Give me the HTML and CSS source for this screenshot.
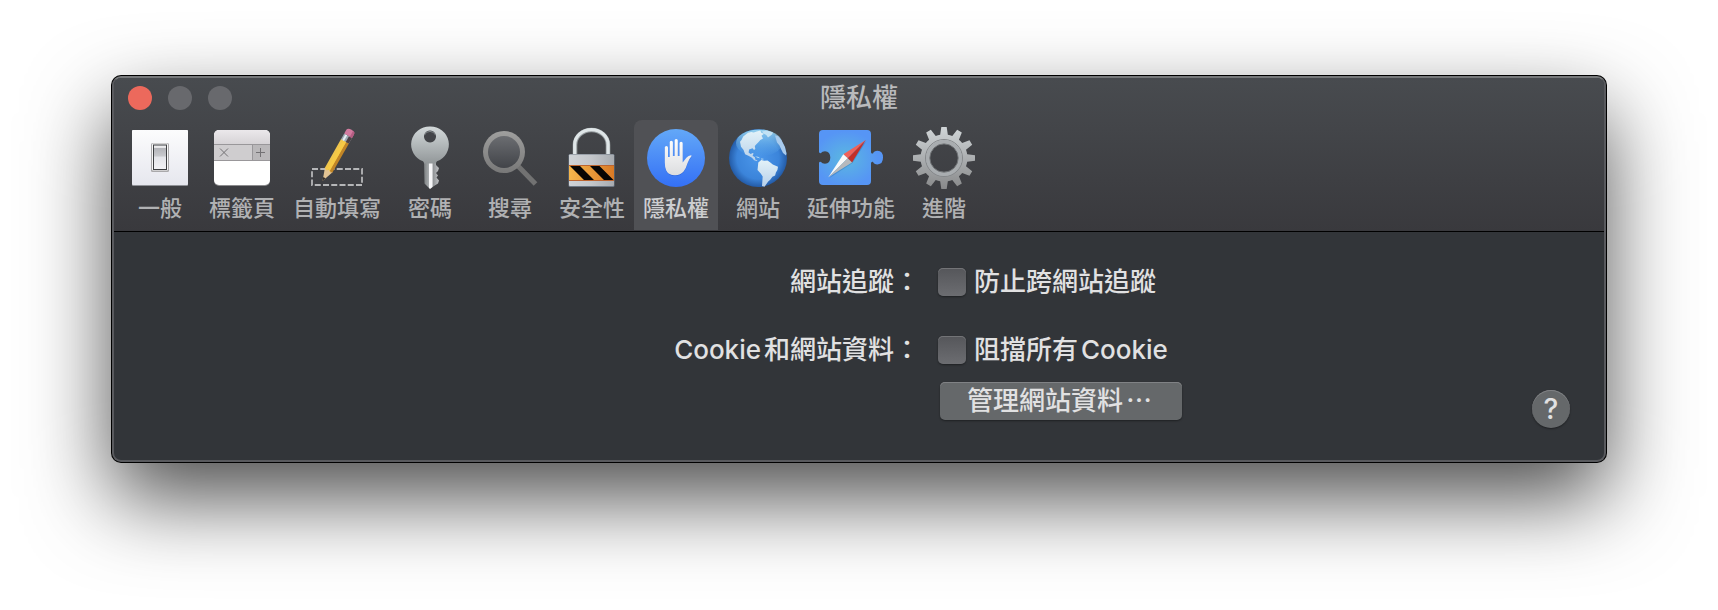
FILE: index.html
```html
<!DOCTYPE html>
<html lang="zh-Hant">
<head>
  <meta charset="UTF-8" />
  <title>隱私權</title>
  <link rel="stylesheet" href="styles.css">
</head>
<body>
  <main class="window">

    <header class="window-head">
      <div class="titlebar">
        <div class="lights">
          <button class="light close" aria-label="關閉"></button>
          <button class="light" aria-label="縮到最小" disabled></button>
          <button class="light" aria-label="縮放" disabled></button>
        </div>
        <h1>隱私權</h1>
      </div>

      <nav class="toolbar">
        <!-- 一般 -->
        <button class="tab">
          <svg viewBox="0 0 64 64">
            <defs>
              <linearGradient id="plate" x2="0" y2="1"><stop offset="0" stop-color="#fcfcfd" /><stop offset="1" stop-color="#e6e7ee" /></linearGradient>
              <linearGradient id="rocker" x2="0" y2="1"><stop offset="0" stop-color="#ececee" /><stop offset=".1" stop-color="#ececee" /><stop offset=".12" stop-color="#b2b3b8" /><stop offset=".46" stop-color="#c9cace" /><stop offset=".48" stop-color="#e3e4e9" /><stop offset="1" stop-color="#f3f3f6" /></linearGradient>
            </defs>
            <rect x="4" y="4" width="56" height="56" rx="1" fill="#8f9196" />
            <rect x="4" y="4" width="56" height="55" rx="1" fill="url(#plate)" />
            <rect x="23" y="17" width="18" height="29" rx="1.500" fill="#aaa9ab" />
            <rect x="24" y="17.500" width="16" height="27" rx="1" fill="#f7f7f7" />
            <rect x="25.500" y="19" width="13" height="24.500" fill="url(#rocker)" stroke="#3d3f42" />
          </svg>
          <span>一般</span>
        </button>

        <!-- 標籤頁 -->
        <button class="tab">
          <svg viewBox="0 0 64 64">
            <defs>
              <linearGradient id="bar" x2="0" y2="1"><stop offset="0" stop-color="#ebe8eb" /><stop offset="1" stop-color="#d6d3d6" /></linearGradient>
            </defs>
            <rect x="4" y="5" width="56" height="55" rx="5" fill="#8b8b8d" />
            <rect x="4" y="4" width="56" height="55" rx="5" fill="#fff" />
            <path d="M4 18V9a5 5 0 0 1 5-5h46a5 5 0 0 1 5 5v9z" fill="url(#bar)" />
            <rect x="4" y="18" width="56" height="16" fill="#cfcdcf" />
            <rect x="42" y="18" width="18" height="16" fill="#bab8ba" />
            <path d="M4 18.500h56M4 34.500h56M42.500 18v16" stroke="#99979a" fill="none" />
            <path d="M10 22.500l8 8M18 22.500l-8 8M50.500 22v9M46 26.500h9" stroke="#737174" fill="none" />
          </svg>
          <span>標籤頁</span>
        </button>

        <!-- 自動填寫 -->
        <button class="tab">
          <svg viewBox="0 0 64 64">
            <rect x="7" y="43" width="50" height="16" fill="none" stroke="#b5b6b8" stroke-width="1.800" stroke-dasharray="6 2.250" />
            <g transform="translate(17.500 55) rotate(29.500)">
              <path d="M0 0l-4.500-13h9z" fill="#e2c393" />
              <path d="M0 0l-1.300-3.800h2.600z" fill="#332c28" />
              <path d="M-4.500-12.500V-46h3.500v34.800z" fill="#f0c64c" />
              <path d="M-2-11.500V-46H2v34.500L0-13z" fill="#f7ca45" />
              <path d="M1.500-12.500V-46h3v33.500l-1.500 1z" fill="#c18526" />
              <rect x="-4.500" y="-52" width="9" height="6.500" fill="#9eabb4" />
              <rect x="-3" y="-52" width="2" height="6.500" fill="#e7eef2" />
              <rect x="1" y="-52" width="3.500" height="6.500" fill="#4c4044" />
              <path d="M-4.500-52v-4q0-3 4.500-3t4.500 3v4z" fill="#d27b9f" />
              <path d="M2-52v-6.800q2.500.4 2.500 2.800v4z" fill="#b45c82" />
            </g>
          </svg>
          <span>自動填寫</span>
        </button>

        <!-- 密碼 -->
        <button class="tab">
          <svg viewBox="0 0 64 64">
            <defs>
              <linearGradient id="keyhead" x2="0" y2="1"><stop offset="0" stop-color="#d3d9da" /><stop offset="1" stop-color="#929799" /></linearGradient>
              <linearGradient id="keyshaft" x2="1" y2="0"><stop offset="0" stop-color="#7c8082" /><stop offset=".3" stop-color="#a4a8aa" /><stop offset=".34" stop-color="#f6f6f8" /><stop offset=".54" stop-color="#f6f6f8" /><stop offset=".6" stop-color="#8f9295" /><stop offset="1" stop-color="#c0c2c5" /></linearGradient>
            </defs>
            <path d="M26 34h12v5l3 3-1 3-2 2 2 2.500-1.500 2 2.500 3-1 3-4 2.500-4 3-5.500-5.500z" fill="url(#keyshaft)" />
            <path fill-rule="evenodd" d="M32 .5a18.500 18 0 0 1 7 34.800q-1 .7-1 2.200H26q0-1.500-1-2.200A18.500 18 0 0 1 32 .5zM32 4.500a6 6 0 1 0 .01 0z" fill="url(#keyhead)" />
            <path d="M26.500 9a6 6 0 0 1 11 0" fill="none" stroke="#80868a" />
          </svg>
          <span>密碼</span>
        </button>

        <!-- 搜尋 -->
        <button class="tab">
          <svg viewBox="0 0 64 64">
            <defs>
              <linearGradient id="rim" x2="0" y2="1"><stop offset="0" stop-color="#9f9f9e" /><stop offset="1" stop-color="#787878" /></linearGradient>
              <linearGradient id="lens" x2="0" y2="1"><stop offset="0" stop-color="#6b6d71" /><stop offset="1" stop-color="#424449" /></linearGradient>
            </defs>
            <path d="M40 40l17.500 18" stroke="#727272" stroke-width="5" />
            <circle cx="26" cy="26" r="21" fill="url(#rim)" />
            <circle cx="26" cy="26" r="16" fill="url(#lens)" />
          </svg>
          <span>搜尋</span>
        </button>

        <!-- 安全性 -->
        <button class="tab">
          <svg viewBox="0 0 64 64">
            <defs>
              <linearGradient id="steel" x2="1" y2="0"><stop offset="0" stop-color="#cfd3d7" /><stop offset=".5" stop-color="#c3c6ca" /><stop offset="1" stop-color="#a7abb0" /></linearGradient>
              <linearGradient id="orange" x2="1" y2="0"><stop offset="0" stop-color="#f5b64c" /><stop offset="1" stop-color="#d97a26" /></linearGradient>
            </defs>
            <path d="M15 30V19a16.500 15 0 0 1 33 0v11" fill="none" stroke="#93999c" stroke-width="4.600" />
            <path d="M14.700 29V18.500a16.700 14.800 0 0 1 33.400 0V29" fill="none" stroke="#dfe6e8" stroke-width="3.200" />
            <rect x="8.500" y="28" width="46" height="33" rx="1.500" fill="#6d7885" />
            <rect x="9" y="28.500" width="45" height="31.500" rx="1" fill="url(#steel)" />
            <rect x="9" y="39.500" width="45" height="15" fill="url(#orange)" />
            <path d="M10 40h10l14 14H24zM30 40h9.500l14 14H44z" fill="#060504" />
            <path d="M9 39.500h45M9 54.500h45" stroke="#bd6530" />
          </svg>
          <span>安全性</span>
        </button>

        <!-- 隱私權 -->
        <button class="tab active" aria-current="page">
          <svg viewBox="0 0 64 64">
            <defs>
              <linearGradient id="blue" x2="0" y2="1"><stop offset="0" stop-color="#63a8f8" /><stop offset="1" stop-color="#3470f5" /></linearGradient>
              <linearGradient id="palm" x2="0" y2="1"><stop offset="0" stop-color="#fff" /><stop offset="1" stop-color="#dcdddf" /></linearGradient>
            </defs>
            <circle cx="32" cy="32" r="29" fill="url(#blue)" />
            <path d="M20.800 21.500a1.600 1.600 0 0 1 3.200 0V31h1.700V16.300a1.600 1.600 0 0 1 3.200 0V30h1.700V14.500a1.600 1.600 0 0 1 3.200 0V30h1.700V17.300a1.600 1.600 0 0 1 3.200 0V36.500l3.700-4.700q2-2.300 4.700-2.600.8.500.2 1.300-2.400 2.500-3.700 6.500-1.400 5-4 8.500-3 3.700-8.600 3.700-6.500 0-8.800-4.700-1.400-3-1.400-8z" fill="#1f56c9" opacity=".5" transform="translate(0 .8)" />
            <path d="M20.800 21.500a1.600 1.600 0 0 1 3.200 0V31h1.700V16.300a1.600 1.600 0 0 1 3.200 0V30h1.700V14.500a1.600 1.600 0 0 1 3.200 0V30h1.700V17.300a1.600 1.600 0 0 1 3.200 0V36.500l3.700-4.700q2-2.300 4.700-2.600.8.500.2 1.300-2.400 2.500-3.700 6.500-1.400 5-4 8.500-3 3.700-8.600 3.700-6.500 0-8.800-4.700-1.400-3-1.400-8z" fill="url(#palm)" />
          </svg>
          <span>隱私權</span>
        </button>

        <!-- 網站 -->
        <button class="tab">
          <svg viewBox="0 0 64 64">
            <defs>
              <radialGradient id="ocean" cx=".5" cy=".5" r=".52"><stop offset="0" stop-color="#4b97ea" /><stop offset=".7" stop-color="#3b84da" /><stop offset="1" stop-color="#20559f" /></radialGradient>
              <linearGradient id="sky" x2="0" y2="1"><stop offset="0" stop-color="#a3e0f8" stop-opacity=".9" /><stop offset="1" stop-color="#69b6ef" stop-opacity="0" /></linearGradient>
              <linearGradient id="land" x2="0" y2="1"><stop offset="0" stop-color="#e3f2f8" /><stop offset="1" stop-color="#b7d0ea" /></linearGradient>
            </defs>
            <circle cx="32" cy="32" r="29" fill="url(#ocean)" />
            <ellipse cx="33" cy="17" rx="23" ry="13.500" fill="url(#sky)" />
            <path d="M15.500 14l1.700-3.500 4.800-3.700 3.300-.8 2.400.6 3-1.200 3.600-.8 1 2.200 2.700.9-2.500 2 1.500 2.700-2.700 1.500-1.700 2.200-2 2-1.800 2 .5 3-1.300 1-1.500-1.800-3.400 1.200-.5 3 2 1.500 2.200-1 .8.5-1 2.200 2.300 1.500.5 2.500 2.200.5-1 .9-2.400-.8-2.300-2.500-3-1.700-3.800-1.800-1.500-4.300-2.600-3.200-1-5z" fill="url(#land)" />
            <path d="M29 30.500l3 .2 2.200 1.500-2.500-.4zM35 32.500l2.500.3-.2.800-2-.1zM36 5.500l5-1 6 2-1 2-4 3-1.700-2.500-2.700-1.500z" fill="#c2e2f5" />
            <path d="M32.300 36.500l3-2.500 3 .8 3.200-.2 2.500 1.700 2.800 2.200 5.200 2.200-.6 3.300-1.500 2.500-.8 3-2.700 1.200-2.200 3-2 1.800-2.500 3.500-1.200 1.800-2.500-.7.4-5.500.3-4-2-3-3.200-3.500.5-4.500z" fill="url(#land)" />
            <path d="M49 9.500l3 .5 3.500 4 3.500 7 1.500 6.500-.5 2-3-2.500-2-4-1.500-3.500-2.500-3z" fill="#a9cbed" />
          </svg>
          <span>網站</span>
        </button>

        <!-- 延伸功能 -->
        <button class="tab">
          <svg viewBox="0 0 64 64">
            <defs>
              <radialGradient id="puzzle" cx=".42" cy=".52" r=".5"><stop offset="0" stop-color="#5bb8e0" /><stop offset="1" stop-color="#5695f5" /></radialGradient>
            </defs>
            <path d="M4 4h44a4 4 0 0 1 4 4v18q0 2 2 1.500 1-2.700 4.500-2.700 5.500.2 5.500 6.800t-5.500 6.800q-3.500 0-4.500-2.700-2-.4-2 1.600V55a4 4 0 0 1-4 4H4a4 4 0 0 1-4-4V37q.3-1.700 2-1 1 1.800 4 1.800 5.300-.3 5.300-6.300T6 25.200q-3 0-4 1.800-1.700.6-2-1V8a4 4 0 0 1 4-4z" fill="url(#puzzle)" />
            <path d="M47 14L33 36 9.300 51.500z" fill="#2368a6" opacity=".35" transform="translate(.5 1)" />
            <path d="M46.800 14L24.300 28.300l4.400 4z" fill="#f0625a" />
            <path d="M46.800 14L33 36.500l-4.300-4.200z" fill="#c32f28" />
            <path d="M9.300 51.200l15-22.900 4.400 4z" fill="#fafafa" />
            <path d="M9.300 51.200L33 36.500l-4.300-4.200z" fill="#b7b9bc" />
          </svg>
          <span>延伸功能</span>
        </button>

        <!-- 進階 -->
        <button class="tab">
          <svg viewBox="0 0 64 64">
            <defs>
              <linearGradient id="metal" gradientUnits="userSpaceOnUse" x1="0" y1="1" x2="0" y2="63"><stop offset="0" stop-color="#d0d5d7" /><stop offset=".5" stop-color="#acafb1" /><stop offset="1" stop-color="#88898a" /></linearGradient>
              <clipPath id="gear">
                <path d="M28 10l1.300-9h5.400l1.300 9z" />
                <path d="M28 10l1.300-9h5.400l1.300 9z" transform="rotate(30 32 32)" />
                <path d="M28 10l1.300-9h5.400l1.300 9z" transform="rotate(60 32 32)" />
                <path d="M28 10l1.300-9h5.400l1.300 9z" transform="rotate(90 32 32)" />
                <path d="M28 10l1.300-9h5.400l1.300 9z" transform="rotate(120 32 32)" />
                <path d="M28 10l1.300-9h5.400l1.300 9z" transform="rotate(150 32 32)" />
                <path d="M28 10l1.300-9h5.400l1.300 9z" transform="rotate(180 32 32)" />
                <path d="M28 10l1.300-9h5.400l1.300 9z" transform="rotate(210 32 32)" />
                <path d="M28 10l1.300-9h5.400l1.300 9z" transform="rotate(240 32 32)" />
                <path d="M28 10l1.300-9h5.400l1.300 9z" transform="rotate(270 32 32)" />
                <path d="M28 10l1.300-9h5.400l1.300 9z" transform="rotate(300 32 32)" />
                <path d="M28 10l1.300-9h5.400l1.300 9z" transform="rotate(330 32 32)" />
                <path clip-rule="evenodd" d="M32 8.500a23.500 23.500 0 1 0 .01 0zM32 18a14 14 0 1 1-.01 0z" />
              </clipPath>
            </defs>
            <rect width="64" height="64" fill="url(#metal)" clip-path="url(#gear)" />
            <circle cx="32" cy="32" r="18.500" fill="none" stroke="#85888b" />
            <circle cx="32" cy="32" r="16.200" fill="none" stroke="#a9adb0" stroke-width="3.400" />
            <circle cx="32" cy="32" r="14.200" fill="none" stroke="#707376" />
          </svg>
          <span>進階</span>
        </button>
      </nav>
    </header>

    <form class="pane">
      <span class="label" id="tracking">網站追蹤：</span>
      <label class="check"><input type="checkbox" aria-describedby="tracking">防止跨網站追蹤</label>

      <span class="label second" id="cookies">Cookie<span class="spaced">和</span>網站資料：</span>
      <label class="check second"><input type="checkbox" aria-describedby="cookies"><span>阻擋所有<span class="spaced">Cookie</span></span></label>

      <button type="button" class="manage">管理網站資料<span class="spaced">⋯</span></button>
      <button type="button" class="help" aria-label="輔助說明">?</button>
    </form>

  </main>
</body>
</html>
```

FILE: styles.css
```css
* {
  box-sizing: border-box;
}
body {
  margin: 0;
  min-height: 100vh;
  padding: 76px 112px;
  background: #fff;
  font-family: Inter, "Noto Sans CJK TC", sans-serif;
  overflow: hidden;
}
button {
  border: none;
  padding: 0;
  background: none;
  font-family: inherit;
  font-weight: inherit;
  color: inherit;
}
.window {
  border: 2px solid #595a5e;
  border-top-color: #77797b;
  border-radius: 9px;
  background: #323539;
  box-shadow: 0 0 0 1px #000, 0 36px 84px rgba(0, 0, 0, 0.7);
  font-weight: 500;
}
.window-head {
  padding-top: 8px;
  background: linear-gradient(#484b4f, #39393d);
  border-bottom: 1px solid #000;
  border-radius: 7px 7px 0 0;
}
.titlebar {
  display: grid;
  grid-template-columns: 1fr auto 1fr;
  align-items: center;
  padding: 0 14px 10px;
}
.titlebar h1 {
  margin: 0;
  font-size: 26px;
  font-weight: inherit;
  line-height: 24px;
  color: #b9babc;
}
.lights {
  display: flex;
  gap: 16px;
}
.light {
  width: 24px;
  height: 24px;
  border-radius: 50%;
  background: #68696d;
}
.light.close {
  background: #ec695c;
}
.toolbar {
  display: flex;
  padding: 0 6px 1px;
}
.tab {
  display: flex;
  flex-direction: column;
  align-items: center;
  gap: 4px;
  min-width: 80px;
  padding: 6px 9px 8px;
  border-radius: 8px 8px 0 0;
  font-size: 22px;
  line-height: 28px;
  color: #b0b1b3;
}
.tab svg {
  width: 64px;
  height: 64px;
  margin: 0 -1px;
}
.tab.active {
  background: #505155;
  color: #cdced0;
}

/* label column ends a little right of the middle */
.pane {
  display: grid;
  grid-template-columns: calc(50% + 78px) 1fr auto;
  column-gap: 18px;
  align-items: start;
  padding: 32px 34px 32px 0;
  font-size: 26px;
  line-height: 36px;
  color: #e1e1e2;
}
.label {
  text-align: right;
}
.check {
  grid-column: 2 / 4;
  display: flex;
  align-items: center;
  gap: 8px;
}
.second {
  margin-top: 32px;
}
.spaced {
  margin: 0 3px;
}
.label .spaced {
  margin-right: 0;
}
.check input {
  appearance: none;
  width: 28px;
  height: 28px;
  margin: 0;
  border-radius: 5px;
  background: linear-gradient(#55565a, #6c6d71);
  box-shadow: inset 0 1px #737477, 0 1px 2px rgba(0, 0, 0, 0.4);
}
.manage {
  grid-column: 2;
  justify-self: start;
  margin: 14px 0 0 2px;
  padding: 0 27px;
  border-radius: 5px;
  background: #65686a;
  box-shadow: inset 0 1px #808285, 0 1px 2px rgba(0, 0, 0, 0.4);
  font-size: 26px;
  line-height: 38px;
}
.help {
  width: 38px;
  height: 38px;
  margin-top: 22px;
  border-radius: 50%;
  background: #65686a;
  box-shadow: inset 0 1px #808285, 0 1px 2px rgba(0, 0, 0, 0.4);
  font-size: 28px;
  line-height: 38px;
}
```
